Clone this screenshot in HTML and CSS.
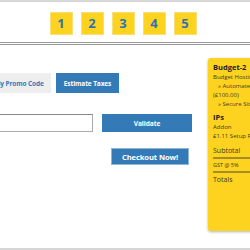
FILE: index.html
```html
<!DOCTYPE html>
<html lang="en">
<head>
    <meta charset="UTF-8">
    <meta name="viewport" content="width=device-width, initial-scale=1.0">
    <title>Checkout</title>
    <link rel="stylesheet" href="styles.css">
</head>
<body>
    <div class="steps">
        <span class="step">1</span>
        <span class="step">2</span>
        <span class="step">3</span>
        <span class="step">4</span>
        <span class="step">5</span>
    </div>

    <div class="main">
        <div class="content">
            <div class="tabs">
                <button class="tab">Apply Promo Code</button>
                <button class="tab active">Estimate Taxes</button>
            </div>
            <div class="promo-row">
                <input type="text" class="promo-input">
                <button class="btn validate-btn">Validate</button>
            </div>
            <div class="checkout-row">
                <button class="btn checkout-btn">Checkout Now!</button>
            </div>
        </div>

        <!-- Order summary -->
        <div class="summary">
            <h3>Budget-2</h3>
            <p>Budget Hosting</p>
            <p class="indent">&raquo; Automated Backups</p>
            <p>(&pound;100.00)</p>
            <p class="indent">&raquo; Secure Site Seal</p>
            <h3 class="ips">IPs</h3>
            <p>Addon</p>
            <p>&pound;1.11 Setup Fee</p>
            <div class="sum-row subtotal">Subtotal</div>
            <div class="sum-row tax">GST @ 5%</div>
            <div class="sum-row totals">Totals</div>
        </div>
    </div>
    <div class="footer"></div>
</body>
</html>
```

FILE: styles.css
```css
* {
  margin: 0;
  padding: 0;
  box-sizing: border-box;
  font-family: "Open Sans", Arial, sans-serif;
}

body {
  background-color: white;
  width: 250px;
  height: 250px;
  overflow: hidden;
  border-top: 2px solid #d6d6d6;
  position: relative;
}

.steps {
  display: flex;
  justify-content: center;
  gap: 8px;
  padding: 10px 4px 7px 0;
  border-bottom: 3px double #999;
}

.step {
  width: 23px;
  height: 23px;
  background-color: #fdd31f;
  border: 1px solid #f7df7a;
  color: #2f72b0;
  font-weight: bold;
  font-size: 13px;
  line-height: 21px;
  text-align: center;
}

.main {
  display: flex;
  gap: 16px;
}

.content {
  width: 192px;
  flex-shrink: 0;
  padding-top: 28px;
}

.tabs {
  display: flex;
  gap: 5px;
  margin-left: -21px;
}

button {
  border: none;
  cursor: pointer;
  font-weight: bold;
  letter-spacing: -0.1px;
}

.tab {
  height: 20px;
  padding: 0 7px;
  font-size: 6.5px;
  background-color: #eeeeee;
  color: #337ab7;
}

.tab.active {
  padding: 0 8px;
  background-color: #337ab7;
  color: white;
}

.promo-row {
  display: flex;
  gap: 9px;
  margin-top: 21px;
  margin-left: -20px;
}

.promo-input {
  width: 113px;
  height: 18px;
  border: 1px solid #aaa;
  border-top-color: #888;
}

.btn {
  background-color: #337ab7;
  color: white;
}

.validate-btn {
  width: 91px;
  height: 18px;
  font-size: 6.6px;
}

.checkout-row {
  display: flex;
  margin-top: 16px;
  padding-left: 111px;
}

.checkout-btn {
  width: 78px;
  height: 17px;
  font-size: 7.6px;
  border: 1px solid #8fb4d8;
}

.summary {
  margin-top: 13px;
  width: 80px;
  height: 173px;
  flex-shrink: 0;
  background-color: #fdd31f;
  border-radius: 3px;
  padding: 3px 5px;
  box-shadow: 0 1px 3px rgba(0, 0, 0, 0.3);
  color: #3d3a2a;
  white-space: nowrap;
}

.summary h3 {
  font-size: 7.5px;
  line-height: 12px;
  color: #222;
}

.summary p {
  font-size: 6px;
  line-height: 9px;
}

.summary .indent {
  padding-left: 5px;
}

.summary .ips {
  margin-top: 2px;
}

.sum-row {
  font-size: 7px;
  line-height: 12px;
}

.subtotal {
  margin-top: 4px;
  border-bottom: 2px solid #a68c28;
}

.tax {
  font-size: 5.5px;
  line-height: 12px;
  border-bottom: 2px solid #a68c28;
}

.totals {
  line-height: 13px;
}

.footer {
  position: absolute;
  left: 0;
  right: 0;
  bottom: 0;
  height: 2px;
  background-color: #d6d6d6;
}
```
